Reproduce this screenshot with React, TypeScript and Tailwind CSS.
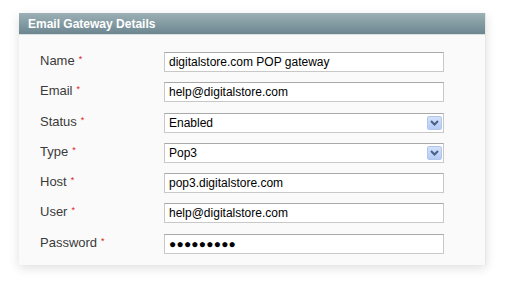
import React from "react";

const Req = () => <span className="text-[#e02020] text-[9px] ml-[4px] relative -top-[3px]">*</span>;

function Field({ label, value, select, pw }: { label: string; value: string; select?: boolean; pw?: boolean }) {
  return (
    <div className="flex items-start h-[20px]">
      <div className="w-[124px] text-[13px] leading-[15px] text-[#3a3a3a] pt-[1px]">
        {label}
        <Req />
      </div>
      <div className="w-[280px] h-[20px] bg-white border border-[#c8c8c8] border-t-[#a9a9a9] flex items-center pl-[4px] pr-[1px] text-[12px] text-black">
        <span className={"flex-1 " + (pw ? "text-[12px] tracking-[0.2px]" : "")}>{value}</span>
        {select && (
          <div className="w-[15px] h-[14px] rounded-[2px] border border-[#b2c6ec] bg-gradient-to-b from-[#d4e1fa] to-[#b4cbf5] flex items-center justify-center">
            <svg width="9" height="6" viewBox="0 0 9 6">
              <path d="M1 1 L4.5 4.5 L8 1" stroke="#4a5f86" strokeWidth="2" fill="none" />
            </svg>
          </div>
        )}
      </div>
    </div>
  );
}

export default function App() {
  return (
    <div className="w-[507px] h-[291px] bg-white pt-[13px] pl-[19px]" style={{ fontFamily: '"Liberation Sans", Arial, sans-serif' }}>
      <div className="w-[467px] h-[252px] bg-[#fafafa] border-r border-[#e6e6e6] shadow-[0_3px_10px_rgba(0,0,0,0.13)] flex flex-col">
        <div className="h-[22px] bg-gradient-to-b from-[#9cb0b5] to-[#6c8690] border-b border-[#d6dfe2] flex items-center pl-[9px] text-white font-bold text-[12px]">
          Email Gateway Details
        </div>
        <div className="flex flex-col gap-[10.3px] pt-[17px] pl-[21px]">
          <Field label="Name" value="digitalstore.com POP gateway" />
          <Field label="Email" value="help@digitalstore.com" />
          <Field label="Status" value="Enabled" select />
          <Field label="Type" value="Pop3" select />
          <Field label="Host" value="pop3.digitalstore.com" />
          <Field label="User" value="help@digitalstore.com" />
          <Field label="Password" value="●●●●●●●●●" pw />
        </div>
      </div>
    </div>
  );
}
